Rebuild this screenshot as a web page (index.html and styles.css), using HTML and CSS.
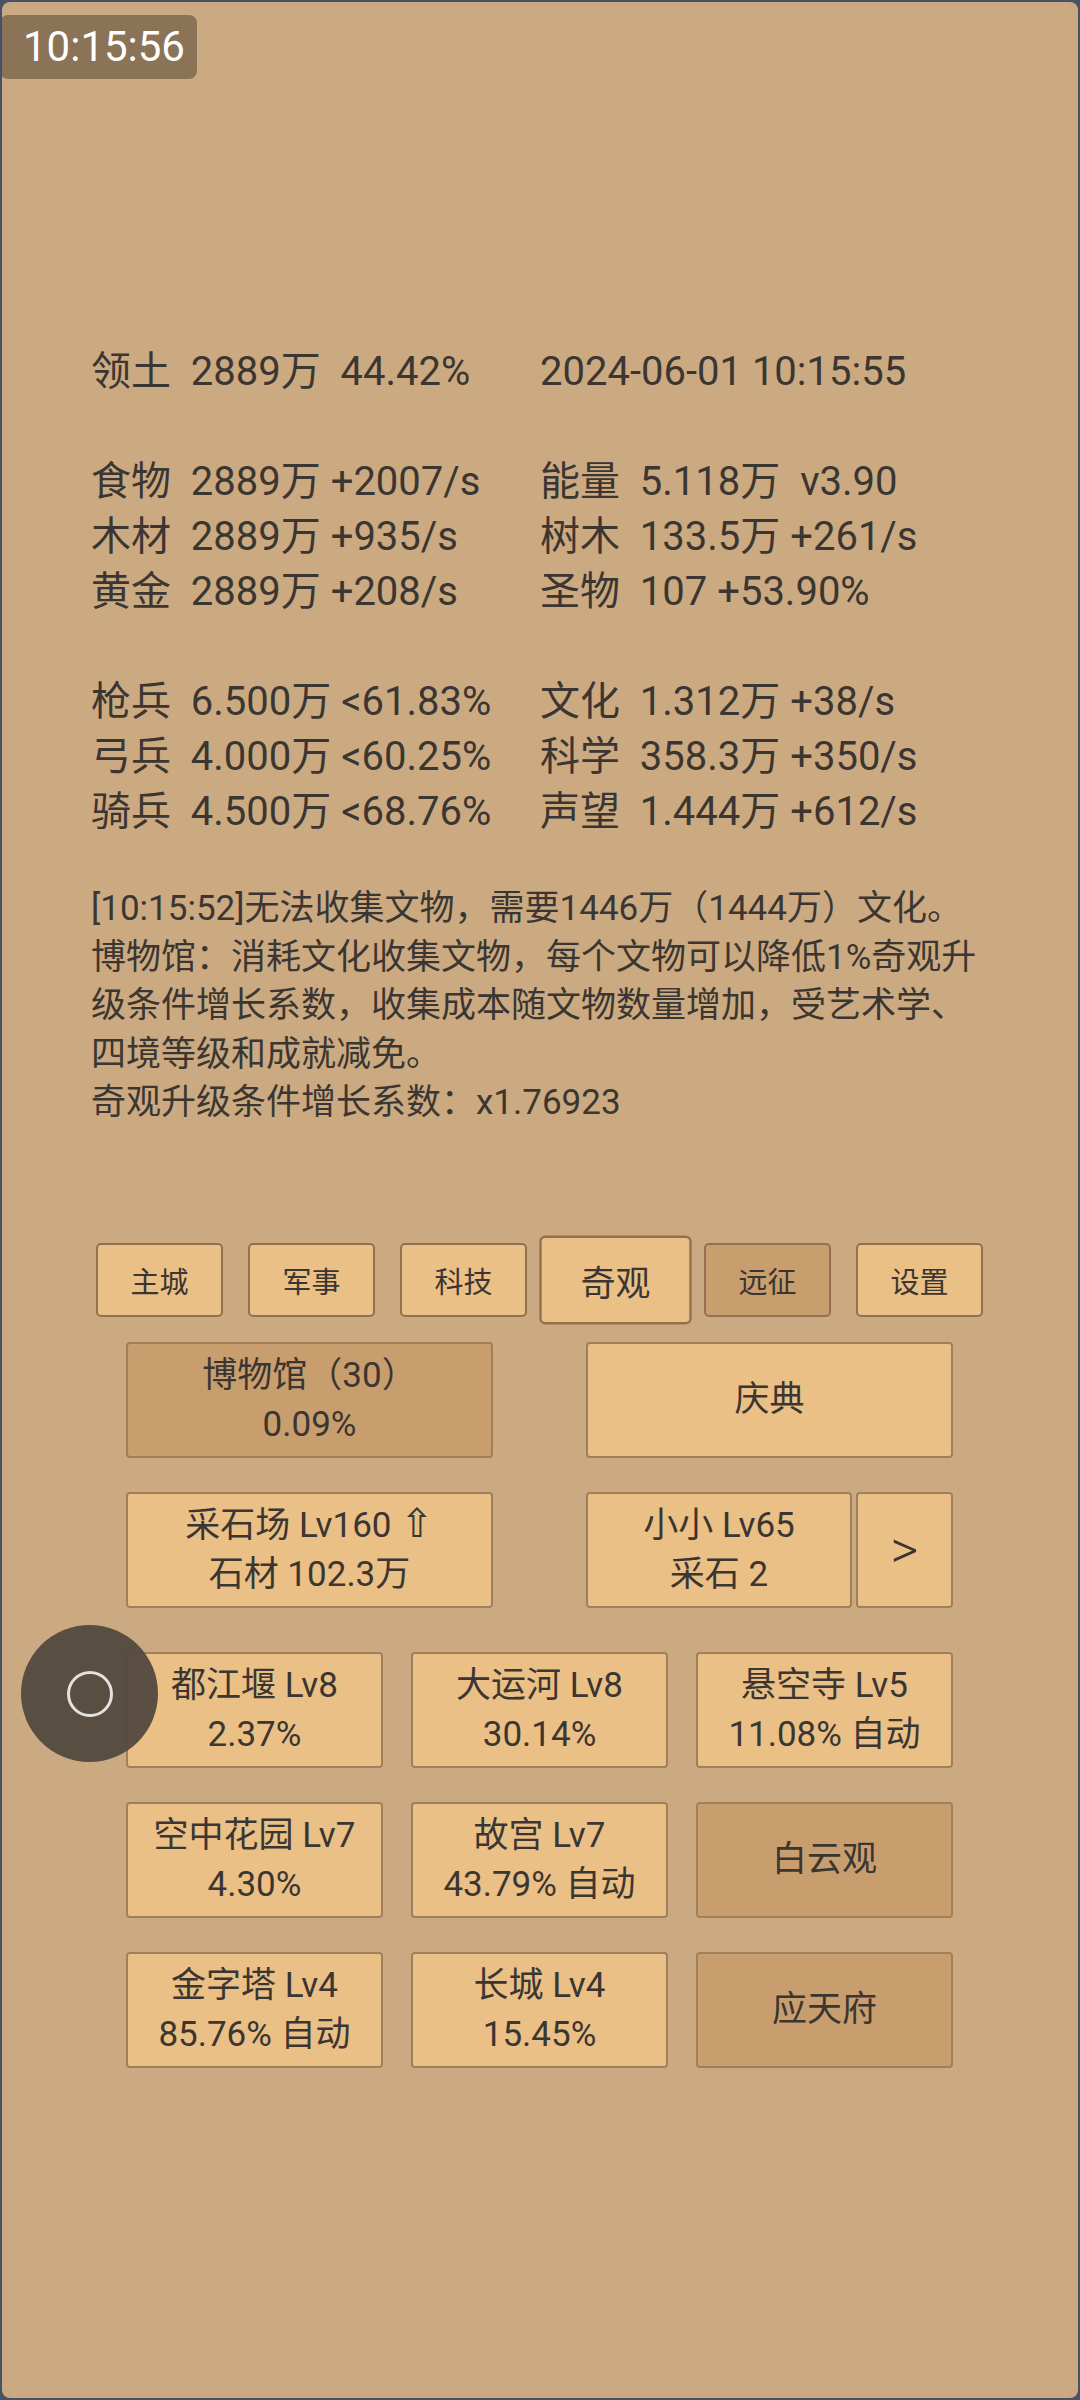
FILE: index.html
```html
<!DOCTYPE html>
<html lang="zh-CN">
<head>
  <meta charset="UTF-8" />
  <meta name="viewport" content="width=device-width, initial-scale=1.0"/>
  <title>奇观</title>
  <link rel="stylesheet" href="styles.css">
</head>
<body>

<div class="tela">

  <div class="relogio">10:15:56</div>

  <div class="stats">
    <div class="linha"><span>领土  2889万  44.42%</span><span>2024-06-01 10:15:55</span></div>
    <div class="linha vazia"></div>
    <div class="linha"><span>食物  2889万 +2007/s</span><span>能量  5.118万  v3.90</span></div>
    <div class="linha"><span>木材  2889万 +935/s</span><span>树木  133.5万 +261/s</span></div>
    <div class="linha"><span>黄金  2889万 +208/s</span><span>圣物  107 +53.90%</span></div>
    <div class="linha vazia"></div>
    <div class="linha"><span>枪兵  6.500万 &lt;61.83%</span><span>文化  1.312万 +38/s</span></div>
    <div class="linha"><span>弓兵  4.000万 &lt;60.25%</span><span>科学  358.3万 +350/s</span></div>
    <div class="linha"><span>骑兵  4.500万 &lt;68.76%</span><span>声望  1.444万 +612/s</span></div>
  </div>

  <div class="mensagem">
    <p>[10:15:52]无法收集文物，需要1446万（1444万）文化。</p>
    <p>博物馆：消耗文化收集文物，每个文物可以降低1%奇观升级条件增长系数，收集成本随文物数量增加，受艺术学、四境等级和成就减免。</p>
    <p>奇观升级条件增长系数：x1.76923</p>
  </div>

  <div class="abas">
    <div class="aba">主城</div>
    <div class="aba">军事</div>
    <div class="aba">科技</div>
    <div class="aba ativa">奇观</div>
    <div class="aba escura">远征</div>
    <div class="aba">设置</div>
  </div>

  <div class="grade2">
    <div class="caixa escura"><span>博物馆（30）<br>0.09%</span></div>
    <div class="caixa"><span>庆典</span></div>
    <div class="caixa"><span>采石场 Lv160 <span class="seta">⇧</span><br>石材 102.3万</span></div>
    <div class="par">
      <div class="caixa larga"><span>小小 Lv65<br>采石 2</span></div>
      <div class="caixa mais"><span>&gt;</span></div>
    </div>
  </div>

  <div class="grade3">
    <div class="caixa"><span>都江堰 Lv8<br>2.37%</span></div>
    <div class="caixa"><span>大运河 Lv8<br>30.14%</span></div>
    <div class="caixa"><span>悬空寺 Lv5<br>11.08% 自动</span></div>
    <div class="caixa"><span>空中花园 Lv7<br>4.30%</span></div>
    <div class="caixa"><span>故宫 Lv7<br>43.79% 自动</span></div>
    <div class="caixa escura"><span>白云观</span></div>
    <div class="caixa"><span>金字塔 Lv4<br>85.76% 自动</span></div>
    <div class="caixa"><span>长城 Lv4<br>15.45%</span></div>
    <div class="caixa escura"><span>应天府</span></div>
  </div>

  <div class="bolinha"><div class="anel"></div></div>

</div>

</body>
</html>
```

FILE: styles.css
```css
* {
  box-sizing: border-box;
  margin: 0;
  padding: 0;
}

body {
  background-color: #46526a;
  font-family: Roboto, "Noto Sans CJK SC", "DejaVu Sans", sans-serif;
  color: #3b3631;
  width: 1080px;
  height: 2400px;
  padding: 2px;
}

.tela {
  position: relative;
  width: 1076px;
  height: 2396px;
  background-color: #cbaa82;
  border-radius: 8px;
  overflow: hidden;
}

/* RELOGIO */
.relogio {
  position: absolute;
  top: 13px;
  left: -2px;
  width: 197px;
  height: 64px;
  background-color: #8a7357;
  color: white;
  font-size: 42px;
  line-height: 64px;
  padding-left: 23px;
  border-radius: 8px;
}

/* STATS */
.stats {
  padding: 342px 89px 0 89px;
  font-size: 40px;
}

.linha {
  display: grid;
  grid-template-columns: 449px 449px;
  height: 55px;
  line-height: 55px;
  white-space: pre;
}

.mensagem {
  margin-top: 46px;
  padding: 0 88px 0 89px;
  font-size: 35px;
  line-height: 48.5px;
}

/* ABAS */
.abas {
  display: flex;
  gap: 25px;
  margin-top: 115px;
  padding-left: 94px;
}

.aba {
  width: 127px;
  height: 74px;
  background-color: #eac086;
  border: 2px solid #937150;
  border-radius: 5px;
  font-size: 29px;
  display: flex;
  align-items: center;
  justify-content: center;
}

.aba.ativa {
  transform: scale(1.2);
}

.escura {
  background-color: #c99e6e !important;
}

/* CAIXAS */
.grade2, .grade3 {
  display: grid;
  padding-left: 124px;
  row-gap: 34px;
}

.grade2 {
  grid-template-columns: 367px 367px;
  column-gap: 93px;
  margin-top: 25px;
}

.grade3 {
  grid-template-columns: 257px 257px 257px;
  column-gap: 28px;
  margin-top: 44px;
}

.caixa {
  height: 116px;
  background-color: #eac086;
  border: 2px solid #a0805c;
  border-radius: 4px;
  font-size: 35px;
  line-height: 49px;
  text-align: center;
  display: flex;
  align-items: center;
  justify-content: center;
}

.par {
  display: flex;
  gap: 4px;
}

.larga {
  width: 266px;
}

.mais {
  width: 97px;
  font-size: 54px;
  font-weight: 300;
}

.seta {
  font-family: "DejaVu Sans", sans-serif;
  font-size: 40px;
  line-height: 40px;
}

/* BOTAO FLUTUANTE */
.bolinha {
  position: absolute;
  left: 19px;
  top: 1623px;
  width: 137px;
  height: 137px;
  border-radius: 50%;
  background-color: rgba(82, 73, 62, 0.95);
  display: flex;
  align-items: center;
  justify-content: center;
}

.anel {
  width: 46px;
  height: 46px;
  border: 3px solid #e4e2de;
  border-radius: 50%;
}
```
